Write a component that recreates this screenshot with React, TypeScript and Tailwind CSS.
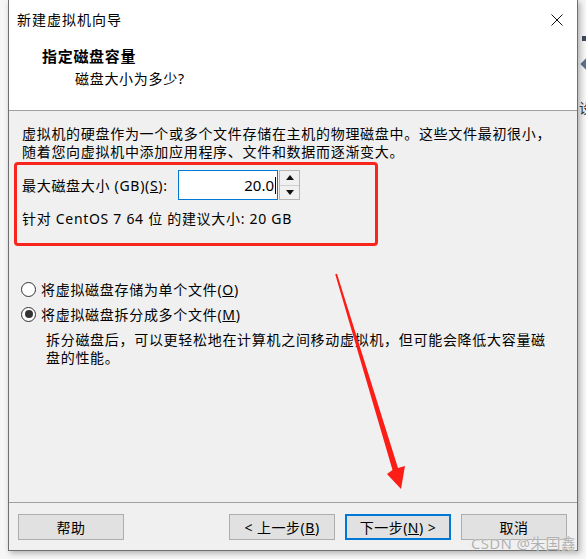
export default function App() {
  return (
    <div className="relative w-[586px] h-[559px] overflow-hidden bg-[#f6f6f6] font-['Noto_Sans','Noto_Sans_CJK_SC',sans-serif] text-[14px] text-black">
      <div className="flex">
        {/* dialog window */}
        <div className="relative z-10 shrink-0 ml-[8px] w-[570px] h-[551px] flex flex-col border-x border-b border-[#6f6f6f] bg-[#f0f0f0] shadow-[2px_2px_6px_rgba(0,0,0,0.3)]">
          {/* header */}
          <div className="h-[111px] bg-white border-b border-[#a0a0a0]">
            <div className="h-[39px] flex items-center justify-between pl-[8px] pr-[14px]">
              <span className="text-[14px] tracking-[1px]">新建虚拟机向导</span>
              <svg width="12" height="12" viewBox="0 0 12 12" className="mt-[1px]">
                <path d="M0.5 0.5 L11.5 11.5 M11.5 0.5 L0.5 11.5" stroke="#111" strokeWidth="1" />
              </svg>
            </div>
            <div className="mt-[7px] pl-[33px] leading-[20px] text-[15px] font-bold tracking-[0.7px]">指定磁盘容量</div>
            <div className="mt-[3px] pl-[66px] leading-[20px] tracking-[0.7px]">磁盘大小为多少?</div>
          </div>

          {/* body */}
          <div className="h-[391px] flex flex-col tracking-[0.7px]">
            <div className="pt-[14px] pl-[13px] leading-[18px]">
              <div>虚拟机的硬盘作为一个或多个文件存储在主机的物理磁盘中。这些文件最初很小，</div>
              <div>随着您向虚拟机中添加应用程序、文件和数据而逐渐变大。</div>
            </div>

            <div className="mt-[9px] pl-[13px] flex items-center h-[30px]">
              <div className="w-[156px] whitespace-nowrap">
                最大磁盘大小 (GB)(<span className="underline">S</span>):
              </div>
              <div className="w-[100px] h-[30px] border border-[#0078d7] bg-white flex items-center justify-end pr-[1px] text-[15px] tracking-normal">
                20.0<span className="ml-[1px] w-[1px] h-[17px] bg-black" />
              </div>
              <div className="ml-[1px] w-[21px] h-[30px] border border-[#b5b5b5] flex flex-col bg-[#f0f0f0]">
                <div className="flex-1 flex items-center justify-center border-b border-[#cfcfcf]">
                  <svg width="8" height="5" viewBox="0 0 8 5"><path d="M4 0 L8 5 L0 5 Z" fill="#111" /></svg>
                </div>
                <div className="flex-1 flex items-center justify-center">
                  <svg width="8" height="5" viewBox="0 0 8 5"><path d="M0 0 L8 0 L4 5 Z" fill="#111" /></svg>
                </div>
              </div>
            </div>

            <div className="mt-[10px] pl-[13px] leading-[18px]">针对 CentOS 7 64 位 的建议大小: 20 GB</div>

            <div className="mt-[51px] pl-[12px] flex flex-col gap-[5px]">
              <label className="flex items-center h-[20px]">
                <span className="w-[15px] h-[15px] rounded-full border border-[#333] bg-white" />
                <span className="ml-[5px]">将虚拟磁盘存储为单个文件(<span className="underline">O</span>)</span>
              </label>
              <label className="flex items-center h-[20px]">
                <span className="w-[15px] h-[15px] rounded-full border border-[#333] bg-white flex items-center justify-center">
                  <span className="w-[8px] h-[8px] rounded-full bg-[#333]" />
                </span>
                <span className="ml-[5px]">将虚拟磁盘拆分成多个文件(<span className="underline">M</span>)</span>
              </label>
            </div>

            <div className="mt-[7px] pl-[37px] leading-[18px]">
              <div>拆分磁盘后，可以更轻松地在计算机之间移动虚拟机，但可能会降低大容量磁</div>
              <div>盘的性能。</div>
            </div>
          </div>

          {/* footer */}
          <div className="flex-1 border-t border-[#a0a0a0] flex items-start pt-[11px] pl-[9px] pr-[10px] tracking-[0.5px]">
            <button className="w-[106px] h-[26px] border border-[#adadad] bg-[#e1e1e1] flex items-center justify-center">帮助</button>
            <div className="ml-auto flex gap-[10px]">
              <button className="w-[106px] h-[26px] border border-[#adadad] bg-[#e1e1e1] flex items-center justify-center">
                &lt; 上一步(<span className="underline">B</span>)
              </button>
              <button className="w-[106px] h-[26px] border-2 border-[#0078d7] bg-[#e1e1e1] flex items-center justify-center">
                下一步(<span className="underline">N</span>) &gt;
              </button>
              <button className="w-[106px] h-[26px] border border-[#adadad] bg-[#e1e1e1] flex items-center justify-center">取消</button>
            </div>
          </div>
        </div>

        {/* what peeks out behind the dialog */}
        <div className="flex flex-col items-start pl-[4px] pt-[36px] text-[#333]">
          <span className="w-[5px] h-[5px] bg-[#3b4a5c]" />
          <span className="mt-[19px] w-[8px] h-[8px] rotate-45 bg-[#5b7290]" />
          <span className="mt-[29px] -ml-[3px] text-[14px]">设</span>
        </div>
      </div>

      {/* red annotation box */}
      <div className="absolute left-[14px] top-[162px] w-[364px] h-[84px] rounded-[4px] border-[3px] border-[#f7251c] pointer-events-none z-20" />

      {/* red annotation arrow */}
      <svg className="absolute inset-0 z-20 pointer-events-none" width="586" height="559" viewBox="0 0 586 559">
        <polygon
          points="335.2,274.3 337,273.8 398,468 405,466 401,489 387,474 392.5,470"
          fill="#fb1d16"
        />
      </svg>

      {/* watermark */}
      <div className="absolute left-[471px] top-[531px] z-30 text-[15px] leading-[24px] text-[#b0b0b0] tracking-[0.3px] [text-shadow:0_0_1px_#ffffff]">
        CSDN @朱国鑫
      </div>
    </div>
  );
}
